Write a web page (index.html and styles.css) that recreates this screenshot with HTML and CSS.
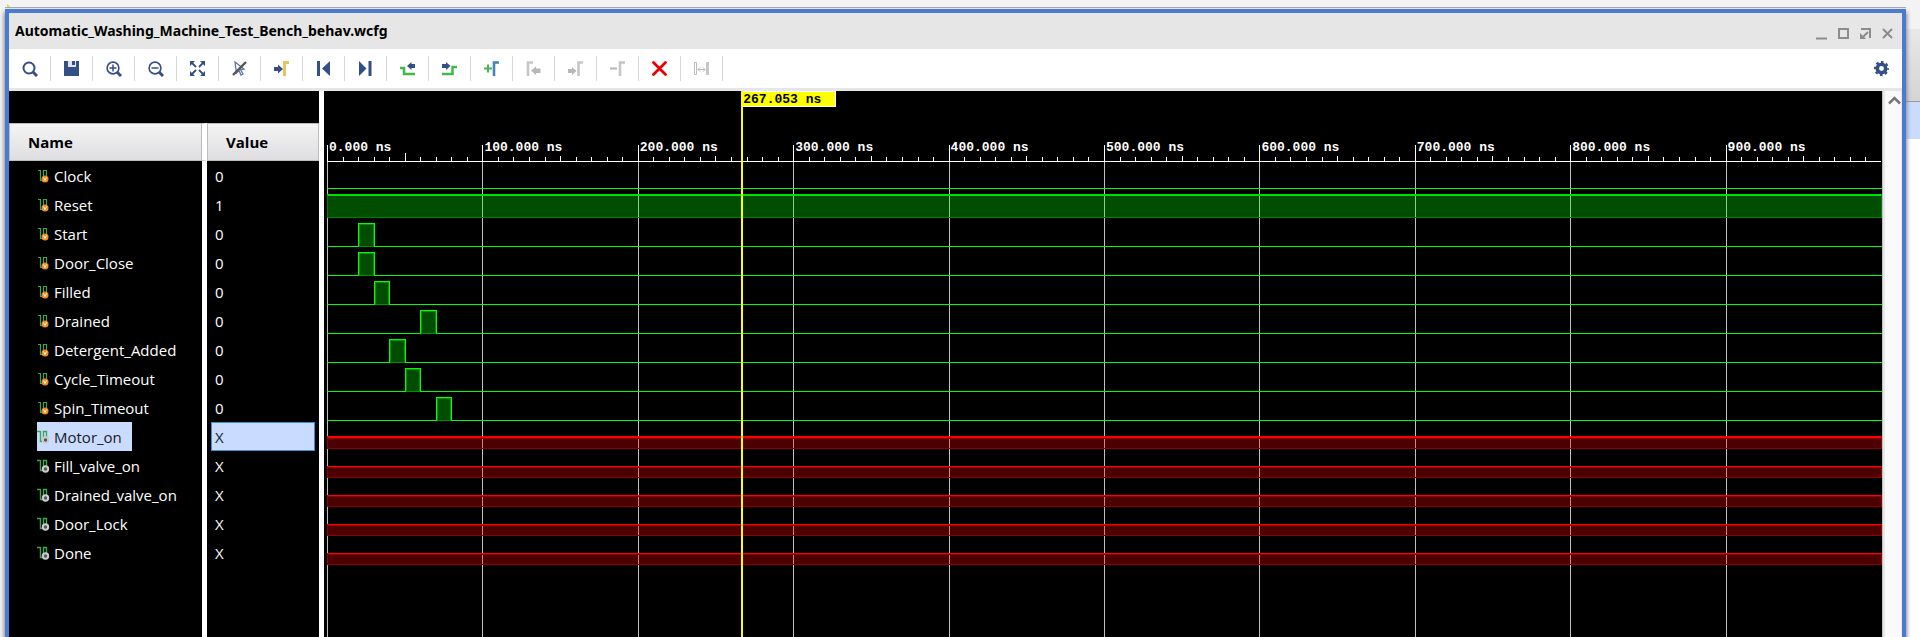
FILE: index.html
```html
<!DOCTYPE html>
<html lang="en">
<head>
<meta charset="utf-8">
<title>Automatic_Washing_Machine_Test_Bench_behav.wcfg</title>
<link rel="stylesheet" href="styles.css">
</head>
<body>
<svg class="defs" aria-hidden="true">
  <symbol id="in" viewBox="0 0 13 14"><path d="M1 1.500H4M3.500 1V11.500H6M6.500 8V1.500H9.500V7" fill="none" stroke="#3fa650" stroke-width="1.200"/><circle cx="8" cy="10" r="3.500" fill="#f28c1e"/><path d="M6.500 8.500L8 11.500L9.500 8.500" fill="none" stroke="#fff"/></symbol>
  <symbol id="out" viewBox="0 0 13 14"><path d="M0 1.500H3.500M3.500 1V11.500H5M6.500 8V1.500H9.500V7" fill="none" stroke="#3fa650" stroke-width="1.400"/><circle cx="8.500" cy="10" r="2.700" fill="#555" stroke="#ccc" stroke-width="2"/></symbol>
</svg>
<main class="window">
  <header class="titlebar">
    <h1>Automatic_Washing_Machine_Test_Bench_behav.wcfg</h1>
    <div class="controls">
      <button aria-label="Minimize"><svg viewBox="0 0 12 12"><path d="M0 10.500H11"/></svg></button>
      <button aria-label="Maximize"><svg viewBox="0 0 12 12"><path d="M1 1H10V10H1Z"/></svg></button>
      <button aria-label="Float"><svg viewBox="0 0 12 12"><path d="M1 1H10V10M8 4L3 9"/><path d="M0 5V11H6Z" fill="#8c8c8c" stroke="none"/></svg></button>
      <button aria-label="Close"><svg viewBox="0 0 12 12"><path d="M1 1L10 10M10 1L1 10"/></svg></button>
    </div>
  </header>
  <nav class="toolbar" aria-label="Waveform tools">
    <button aria-label="Find"><svg viewBox="0 0 16 16"><circle cx="7" cy="7" r="5.500" fill="none" stroke="#344f86" stroke-width="2"/><path d="M11 11L15 15" stroke="#344f86" stroke-width="3"/></svg></button>
    <button aria-label="Save"><svg viewBox="0 0 16 16"><path d="M0 0H4V6H12V0H15V15H0Z" fill="#344f86"/><path d="M4 0H12V6H4Z" fill="#dfe4ee"/><path d="M8 0H11V4H8Z" fill="#344f86"/></svg></button>
    <button aria-label="Zoom in"><svg viewBox="0 0 16 16"><circle cx="7" cy="7" r="5.900" fill="none" stroke="#344f86" stroke-width="1.600"/><path d="M11 11L15 15" stroke="#344f86" stroke-width="3"/><path d="M3.500 7H10.500M7 3.500V10.500" stroke="#344f86" stroke-width="1.500"/></svg></button>
    <button aria-label="Zoom out"><svg viewBox="0 0 16 16"><circle cx="7" cy="7" r="5.900" fill="none" stroke="#344f86" stroke-width="1.600"/><path d="M11 11L15 15" stroke="#344f86" stroke-width="3"/><path d="M3.500 7H10.500" stroke="#344f86" stroke-width="1.500"/></svg></button>
    <button aria-label="Zoom fit"><svg viewBox="0 0 16 16"><path d="M0 0H5L0 5ZM15 0V5L10 0ZM0 15V10L5 15ZM15 15H10L15 10Z" fill="#344f86"/><path d="M1 1L6 6M14 1L9 6M1 14L6 9M14 14L9 9" stroke="#344f86" stroke-width="1.800"/></svg></button>
    <button aria-label="Toggle select mode"><svg viewBox="0 0 16 16"><path d="M3 1L12 8L8.500 8.500L11 13L9 14L7 9.500L4.500 12Z" fill="#fff" stroke="#6077a5" stroke-width="1.300"/><path d="M1 14L14 1" stroke="#555" stroke-width="2.400"/></svg></button>
    <button aria-label="Go to cursor"><svg viewBox="0 0 16 16"><path d="M0 6H4V3.500L9 8L4 12.500V10H0Z" fill="#344f86"/><path d="M10.500 15V1.500H15" fill="none" stroke="#e2c75e" stroke-width="3"/></svg></button>
    <button aria-label="Go to start"><svg viewBox="0 0 16 16"><path d="M1 0H4V15H1ZM14 0V15L6 7.500Z" fill="#344f86"/></svg></button>
    <button aria-label="Go to end"><svg viewBox="0 0 16 16"><path d="M10.500 0H13.500V15H10.500ZM1 0V15L8.500 7.500Z" fill="#344f86"/></svg></button>
    <button aria-label="Previous transition"><svg viewBox="0 0 16 16"><path d="M0 7H4V13H15" fill="none" stroke="#45b64a" stroke-width="2.500"/><path d="M7 5L11.500 1V3H15V7H11.500V9Z" fill="#344f86"/></svg></button>
    <button aria-label="Next transition"><svg viewBox="0 0 16 16"><path d="M0 13H10.500V6H15" fill="none" stroke="#45b64a" stroke-width="2.500"/><path d="M8.500 5L4 1V3H0V7H4V9Z" fill="#344f86"/></svg></button>
    <button aria-label="Add marker"><svg viewBox="0 0 16 16"><path d="M0 7.500H8M4 3.500V11.500" stroke="#45b64a" stroke-width="2"/><path d="M10 15V1.500H15" fill="none" stroke="#4185ba" stroke-width="2.600"/></svg></button>
    <button aria-label="Previous marker" disabled><svg viewBox="0 0 16 16"><path d="M2 15V1.500H7" fill="none" stroke="#c6c6c6" stroke-width="2.600"/><path d="M5 9.500L10 5.500V7.500H14.500V12H10V14Z" fill="#b7b7b7"/></svg></button>
    <button aria-label="Next marker" disabled><svg viewBox="0 0 16 16"><path d="M10.500 15V1.500H15" fill="none" stroke="#c6c6c6" stroke-width="2.600"/><path d="M8.500 10L4 6V8H0V12H4V14Z" fill="#b7b7b7"/></svg></button>
    <button aria-label="Remove marker" disabled><svg viewBox="0 0 16 16"><path d="M0 7.500H7" stroke="#b7b7b7" stroke-width="2"/><path d="M10 15V1.500H15" fill="none" stroke="#c6c6c6" stroke-width="2.600"/></svg></button>
    <button aria-label="Delete"><svg viewBox="0 0 16 16"><path d="M1.500 1.500L13.500 13.500M13.500 1.500L1.500 13.500" stroke="#e80000" stroke-width="2.800" stroke-linecap="round"/></svg></button>
    <button aria-label="Swap cursors" disabled><svg viewBox="0 0 16 16"><path d="M.5 1.500H2.500V13.500H.5Z" fill="none" stroke="#bbb"/><path d="M12 1H15V14H12Z" fill="#c6c6c6"/><path d="M4 8.500H11M6 6.500L4 8.500L6 10.500M9 6.500L11 8.500L9 10.500" fill="none" stroke="#b7b7b7"/></svg></button>
    <button class="settings" aria-label="Settings"><svg viewBox="0 0 16 16"><circle cx="7.500" cy="7.500" r="4.200" fill="none" stroke="#344f86" stroke-width="3.500"/><circle cx="7.500" cy="7.500" r="6.500" fill="none" stroke="#344f86" stroke-width="2" stroke-dasharray="2.600 2.505" stroke-dashoffset="1.300"/></svg></button>
  </nav>
  <div class="content">
    <section class="signals">
      <table>
        <thead><tr><th class="name">Name</th><th>Value</th></tr></thead>
        <tbody>
          <tr><td class="name"><span><svg><use href="#in"/></svg>Clock</span></td><td><span>0</span></td></tr>
          <tr><td class="name"><span><svg><use href="#in"/></svg>Reset</span></td><td><span>1</span></td></tr>
          <tr><td class="name"><span><svg><use href="#in"/></svg>Start</span></td><td><span>0</span></td></tr>
          <tr><td class="name"><span><svg><use href="#in"/></svg>Door_Close</span></td><td><span>0</span></td></tr>
          <tr><td class="name"><span><svg><use href="#in"/></svg>Filled</span></td><td><span>0</span></td></tr>
          <tr><td class="name"><span><svg><use href="#in"/></svg>Drained</span></td><td><span>0</span></td></tr>
          <tr><td class="name"><span><svg><use href="#in"/></svg>Detergent_Added</span></td><td><span>0</span></td></tr>
          <tr><td class="name"><span><svg><use href="#in"/></svg>Cycle_Timeout</span></td><td><span>0</span></td></tr>
          <tr><td class="name"><span><svg><use href="#in"/></svg>Spin_Timeout</span></td><td><span>0</span></td></tr>
          <tr class="selected"><td class="name"><span><svg><use href="#out"/></svg>Motor_on</span></td><td><span>X</span></td></tr>
          <tr><td class="name"><span><svg><use href="#out"/></svg>Fill_valve_on</span></td><td><span>X</span></td></tr>
          <tr><td class="name"><span><svg><use href="#out"/></svg>Drained_valve_on</span></td><td><span>X</span></td></tr>
          <tr><td class="name"><span><svg><use href="#out"/></svg>Door_Lock</span></td><td><span>X</span></td></tr>
          <tr><td class="name"><span><svg><use href="#out"/></svg>Done</span></td><td><span>X</span></td></tr>
        </tbody>
      </table>
    </section>
    <section class="waves">
      <div class="plot">
        <div class="timescale">
          <div class="column"><div class="mark"><b>0.000 ns</b><div class="ticks"><i></i><i></i><i></i><i></i><i></i><i></i><i></i><i></i><i></i><i></i></div></div></div>
          <div class="column"><div class="mark"><b>100.000 ns</b><div class="ticks"><i></i><i></i><i></i><i></i><i></i><i></i><i></i><i></i><i></i><i></i></div></div></div>
          <div class="column"><div class="mark"><b>200.000 ns</b><div class="ticks"><i></i><i></i><i></i><i></i><i></i><i></i><i></i><i></i><i></i><i></i></div></div></div>
          <div class="column"><div class="mark"><b>300.000 ns</b><div class="ticks"><i></i><i></i><i></i><i></i><i></i><i></i><i></i><i></i><i></i><i></i></div></div></div>
          <div class="column"><div class="mark"><b>400.000 ns</b><div class="ticks"><i></i><i></i><i></i><i></i><i></i><i></i><i></i><i></i><i></i><i></i></div></div></div>
          <div class="column"><div class="mark"><b>500.000 ns</b><div class="ticks"><i></i><i></i><i></i><i></i><i></i><i></i><i></i><i></i><i></i><i></i></div></div></div>
          <div class="column"><div class="mark"><b>600.000 ns</b><div class="ticks"><i></i><i></i><i></i><i></i><i></i><i></i><i></i><i></i><i></i><i></i></div></div></div>
          <div class="column"><div class="mark"><b>700.000 ns</b><div class="ticks"><i></i><i></i><i></i><i></i><i></i><i></i><i></i><i></i><i></i><i></i></div></div></div>
          <div class="column"><div class="mark"><b>800.000 ns</b><div class="ticks"><i></i><i></i><i></i><i></i><i></i><i></i><i></i><i></i><i></i><i></i></div></div></div>
          <div class="column"><div class="mark"><b>900.000 ns</b><div class="ticks"><i></i><i></i><i></i><i></i><i></i><i></i><i></i><i></i><i></i><i></i></div></div></div>
        </div>
        <div class="traces">
          <div class="trace low"></div>
          <div class="trace high"><div></div></div>
          <div class="trace low"><div class="pulse at20"></div></div>
          <div class="trace low"><div class="pulse at20"></div></div>
          <div class="trace low"><div class="pulse at30"></div></div>
          <div class="trace low"><div class="pulse at60"></div></div>
          <div class="trace low"><div class="pulse at40"></div></div>
          <div class="trace low"><div class="pulse at50"></div></div>
          <div class="trace low"><div class="pulse at70"></div></div>
          <div class="trace unknown active"><div></div></div>
          <div class="trace unknown"><div></div></div>
          <div class="trace unknown"><div></div></div>
          <div class="trace unknown"><div></div></div>
          <div class="trace unknown"><div></div></div>
        </div>
        <div class="cursor"><b>267.053 ns</b></div>
      </div>
    </section>
    <div class="scrollbar"><button aria-label="Scroll up"><svg viewBox="0 0 13 9"><path d="M1 7.500L6.500 2L12 7.500" fill="none" stroke="#777" stroke-width="2.500"/></svg></button></div>
  </div>
</main>
<aside class="behind"><div class="behind-head"></div><div class="behind-row"></div><div class="behind-body"></div></aside>
</body>
</html>
```
FILE: styles.css
```css
* { box-sizing: border-box; }

body {
  margin: 0;
  min-height: 100vh;
  display: flex;
  overflow: hidden;
  background: linear-gradient(45deg, #dfdf50 50%, transparent 50%) 7px 4px / 6px 5px no-repeat #f3f3f3;
  font-family: "Open Sans", "Noto Sans", sans-serif;
  font-size: 15px;
  color: #000;
}

button {
  padding: 0;
  border: 0;
  background: none;
  display: flex;
  align-items: center;
  justify-content: center;
}

.defs { display: none; }

.window {
  flex: 1;
  min-width: 0;
  margin: 9px 0 0 5px;
  border: 4px solid #4a7bd0;
  border-bottom: 0;
  display: flex;
  flex-direction: column;
  background: #fff;
  box-shadow: 0 -1px 0 #e4e4e4, 0 -2px 0 #a8a8a8, 0 4px 4px 1px #888;
  z-index: 1;
}

.titlebar {
  height: 36px;
  padding: 0 8px 0 6px;
  display: flex;
  align-items: center;
  justify-content: space-between;
  background: #e6e6e6;
}

.titlebar h1 {
  margin: 0;
  font-family: "Noto Sans", "Open Sans", sans-serif;
  font-size: 14px;
  line-height: 20px;
}

.controls { display: flex; gap: 10px; padding-top: 5px; }
.controls svg { width: 12px; height: 12px; fill: none; stroke: #8c8c8c; stroke-width: 2; }

.toolbar {
  height: 42px;
  display: flex;
  align-items: center;
  border-bottom: 3px solid #e6e6e6;
}

.toolbar button {
  width: 42px;
  height: 25px;
  border-right: 1px solid #d6d6d6;
}

.toolbar svg { width: 16px; height: 16px; }
.toolbar .settings { width: 40px; margin-left: auto; border: 0; }

.content { flex: 1; display: flex; }

.signals {
  width: 310px;
  padding-top: 32px;
  background: linear-gradient(#fff, #fff) 193px 32px / 5px 100% no-repeat #000;
}

.signals table {
  width: 100%;
  table-layout: fixed;
  border-collapse: separate;
  border-spacing: 0;
}

.signals th, .signals td { padding: 0; text-align: left; }

.signals th {
  height: 38px;
  padding-left: 18px;
  border: 1px solid #bcbcbc;
  background: linear-gradient(#f4f4f4, #dedee1);
}

.signals th.name { width: 198px; border-right: 5px solid #fff; box-shadow: inset -1px 0 #bcbcbc; background-clip: padding-box; }
.signals td { height: 29px; padding-left: 4px; color: #fff; line-height: 28px; }
.signals td.name { padding-left: 28px; }
.signals td span { display: block; height: 29px; padding-left: 3px; border: 1px solid transparent; white-space: nowrap; }
.signals td.name span { display: inline-flex; align-items: center; gap: 4px; padding: 0 10px 0 0; border-width: 1px 0 0; vertical-align: top; }
.signals svg { width: 13px; height: 14px; }
.signals td:last-child { padding-right: 4px; }

.selected span { background: #c9dcff; background-clip: border-box; color: #1a1a1a; }
.signals .selected td:last-child span { border-color: #3a8fd0; }

.waves {
  flex: 1;
  min-width: 0;
  margin-left: 5px;
  padding-left: 3px;
  background: #000;
}

.plot {
  height: 100%;
  display: grid;
  grid-template: 1fr / 1fr;
  position: relative;
  border-right: 1px solid #c0c0c0;
}

.plot b { font: bold 13px/15px "Liberation Mono", monospace; white-space: pre; }

.timescale, .traces { grid-area: 1 / 1; }
.timescale { display: grid; grid-template-columns: repeat(10, 1fr); margin-right: 1px; }

.column { background: linear-gradient(#c0c0c0, #c0c0c0) 0 71px / 1px 100% no-repeat; }

.mark {
  height: 71px;
  display: flex;
  flex-direction: column;
  justify-content: flex-end;
  border-bottom: 1px solid #fff;
  color: #fff;
}

.mark b { padding-left: 2px; }
.ticks { height: 6px; display: grid; grid-template: 6px / repeat(10, 1fr); align-items: end; }
.ticks i { height: 4px; border-left: 1px solid #fff; }
.ticks i:first-child { height: 16px; }
.ticks i:nth-child(6) { height: 5px; }
.column:first-child i:nth-child(6) { height: 8px; }

.traces { padding-top: 70px; }
.trace { height: 29px; padding-top: 4px; }
.low { background: linear-gradient(#0f0, #0f0) 0 27px / 100% 1px no-repeat; }

.high div {
  height: 24px;
  border: 1px solid #008000;
  border-top: 2px solid #00e000;
  background: rgba(0, 255, 0, .3);
  background-clip: padding-box;
}

.pulse {
  width: calc(1% + 1px);
  height: 24px;
  border: 1px solid #0f0;
  border-bottom: 0;
  background: #004c00;
  box-shadow: inset 0 0 0 1px #009000;
}

.at20 { margin-left: 2%; }
.at30 { margin-left: 3%; }
.at40 { margin-left: 4%; }
.at50 { margin-left: 5%; }
.at60 { margin-left: 6%; }
.at70 { margin-left: 7%; }

.unknown { padding-top: 15px; }

.unknown div {
  height: 12px;
  border: 1px solid #900000;
  border-top-color: #f00;
  background: rgba(255, 0, 0, .3);
  background-clip: padding-box;
  box-shadow: inset 0 1px #900000;
}

.active { padding-top: 14px; }
.active div { height: 13px; border-top-width: 2px; }

.cursor {
  position: absolute;
  left: calc(26.7053% - 1px);
  top: 0;
  bottom: 0;
  border-left: 2px solid #ff0;
}

.cursor b {
  display: block;
  width: 93px;
  height: 16px;
  border: 1px solid #fff;
  border-left: 0;
  background: #ff0;
  color: #000;
}

.scrollbar {
  width: 19px;
  padding: 5px 2px 0 3px;
  border-left: 2px solid #e8e8e8;
  border-right: 1px solid #e8e8e8;
  background: #fafafa;
}

.scrollbar svg { width: 13px; height: 9px; }

.behind { width: 14px; padding-top: 29px; display: flex; flex-direction: column; }
.behind-head { height: 73px; border-bottom: 1px solid #999; background: linear-gradient(#e8e8e8, #d4d4d4); }
.behind-row { height: 37px; background: #c9dcff; }
.behind-body { flex: 1; background: #fff; }
```
